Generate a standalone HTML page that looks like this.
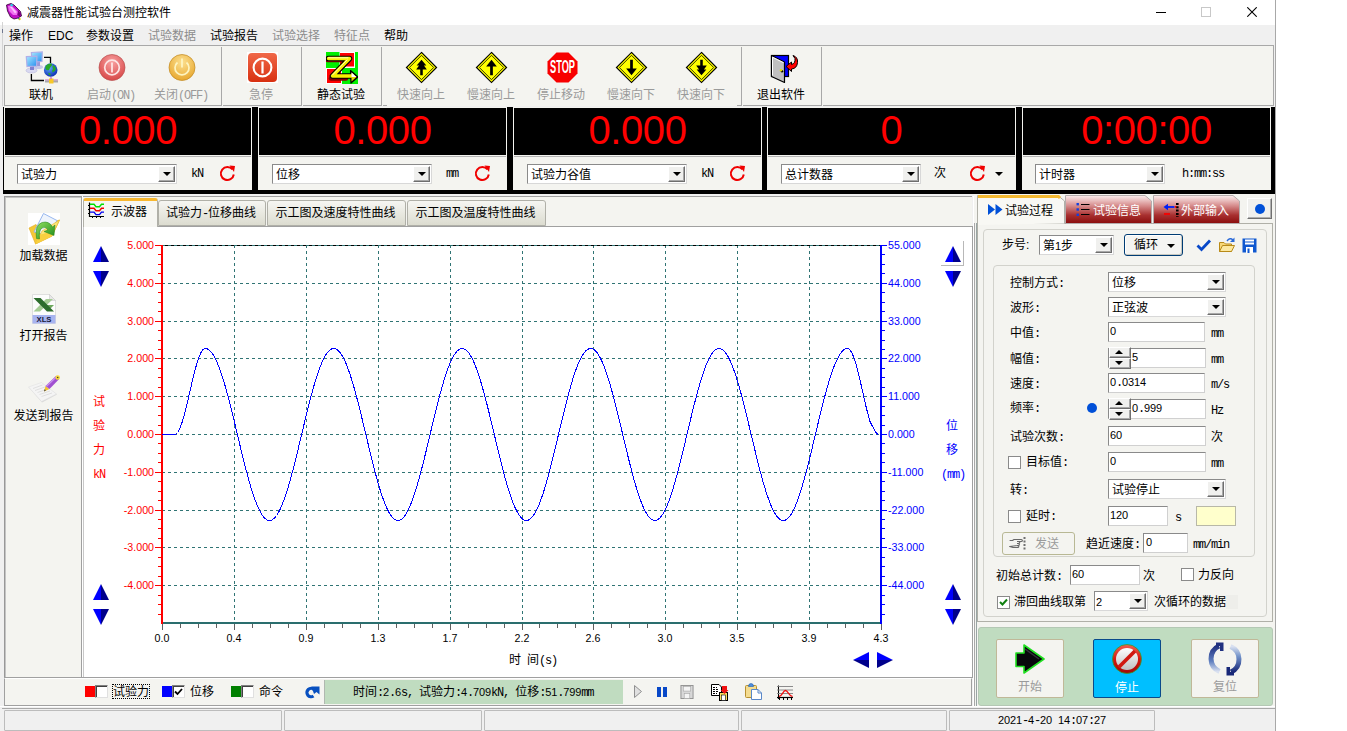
<!DOCTYPE html>
<html lang="zh-CN"><head><meta charset="utf-8"><title>减震器性能试验台测控软件</title>
<style>
*{box-sizing:border-box;margin:0;padding:0}
html,body{width:1347px;height:731px;overflow:hidden;background:#fff}
body{font-family:"Liberation Sans","Noto Sans CJK SC",sans-serif;font-size:12px;color:#000;line-height:1}
#win{position:absolute;left:0;top:0;width:1276px;height:731px;background:#f0f0f0;overflow:hidden}
.a{position:absolute}
.t{position:absolute;white-space:nowrap;font-size:12px;line-height:14px;height:14px}
.l{white-space:pre;font-family:"Liberation Mono",monospace;letter-spacing:-1.2px;font-size:12px}
.l b{display:inline-block;width:6px;text-align:center;font-family:"Liberation Sans",sans-serif;font-size:11px;font-weight:normal;letter-spacing:0}
.c{text-align:center}
.dis{color:#9a9a9a}
.menu{position:absolute;top:28px;height:16px;line-height:16px;font-size:12px;white-space:nowrap}
.panelbg{background:#f4f4f0}
.tb{position:absolute;top:88px;width:70px;text-align:center;font-size:12px;line-height:14px;white-space:nowrap}
.combo{position:absolute;background:#fff;border:1px solid #8a8a8a;border-right-color:#d8d8d8;border-bottom-color:#d8d8d8;height:20px}
.combo .tx{position:absolute;left:3px;top:3px;font-size:12px;line-height:14px;white-space:nowrap}
.combo .btn{position:absolute;right:1px;top:1px;bottom:1px;width:17px;background:#f0f0ee;border:1px solid #fff;border-right-color:#6e6e6e;border-bottom-color:#6e6e6e;box-shadow:inset -1px -1px 0 #a8a8a8}
.combo .btn:after{content:"";position:absolute;left:4px;top:5px;border:4px solid transparent;border-top:4px solid #000;border-bottom:0}
.inp{position:absolute;background:#fff;border:1px solid #8a8a8a;border-right-color:#d0d0d0;border-bottom-color:#d0d0d0;height:20px}
.inp .tx{position:absolute;left:3px;top:1px;font-size:12px;line-height:14px;white-space:nowrap}
.cb{position:absolute;width:13px;height:13px;background:#fff;border:1px solid #8a8a8a}
.grp{position:absolute;border:1px solid #d2d2cc;border-radius:4px}
.big{position:absolute;top:108px;height:47px;background:#000;color:#f00;font-family:"Liberation Sans",sans-serif;font-size:40px;line-height:45px;letter-spacing:-0.4px;text-align:center;white-space:nowrap}
.ax{font-family:"Liberation Sans",sans-serif;font-size:10.67px}
</style></head><body><div id="win">
<div class="a" style="left:0;top:0;width:1276px;height:25px;background:#fff"></div>
<svg class="a" style="left:5px;top:2px" width="18" height="19" viewBox="0 0 18 19">
<path d="M1.500 3 L6 1.500 L9 3 L15.500 9.500 L16.500 14 L13 16 L9 17 L5.500 15 L2.500 9Z" fill="#c010c8" stroke="#300030" stroke-width=".8"/>
<path d="M3 4 L6.500 3.500 L13 10 L12 13 L8 13 L4 9Z" fill="#f070f0"/><path d="M5 5 L7 5 L11.500 10 L10 11.500Z" fill="#fcc0fc"/>
<path d="M6 1.800 L8.500 3 L7 4.500 L5 3.500Z" fill="#20e0e8"/><path d="M13 8 L16 12 L15 15 L12.500 13Z" fill="#780080"/>
<circle cx="14.500" cy="17" r="1.200" fill="#e0e000"/><path d="M13 16 l1.500 1" stroke="#2060d0" stroke-width="1"/></svg>
<div class="t" style="left:27px;top:6px;line-height:15px;height:15px">减震器性能试验台测控软件</div>
<div class="a" style="left:1156px;top:12px;width:10px;height:1px;background:#000"></div>
<div class="a" style="left:1201px;top:7px;width:10px;height:10px;border:1px solid #c8c8c8"></div>
<svg class="a" style="left:1247px;top:7px" width="10" height="10" viewBox="0 0 10 10"><path d="M.3 .3 L9.700 9.700 M9.700 .3 L.3 9.700" stroke="#000" stroke-width="1.100"/></svg>
<div class="a" style="left:0;top:25px;width:1276px;height:20px;background:#f0f0f0"></div>
<div class="a" style="left:2px;top:22px;width:1px;height:86px;background:#d4d4d4"></div>
<div class="a" style="left:2px;top:29px;width:1px;height:4px;background:#707890"></div>
<div class="menu" style="left:9px;">操作</div>
<div class="menu" style="left:48px;">EDC</div>
<div class="menu" style="left:86px;">参数设置</div>
<div class="menu" style="left:148px;color:#8c8c8c;">试验数据</div>
<div class="menu" style="left:210px;">试验报告</div>
<div class="menu" style="left:272px;color:#8c8c8c;">试验选择</div>
<div class="menu" style="left:334px;color:#8c8c8c;">特征点</div>
<div class="menu" style="left:384px;">帮助</div>
<div class="a panelbg" style="left:4px;top:45px;width:1270px;height:62px;border:1px solid #a8a8a8;border-bottom:0"></div>
<div class="a" style="left:5px;top:47px;width:217px;height:59px;border-right:1px solid #a8a8a8;border-bottom:1px solid #a8a8a8"></div>
<div class="a" style="left:223px;top:47px;width:79px;height:59px;border-right:1px solid #a8a8a8;border-bottom:1px solid #a8a8a8"></div>
<div class="a" style="left:303px;top:47px;width:79px;height:59px;border-right:1px solid #a8a8a8;border-bottom:1px solid #a8a8a8"></div>
<div class="a" style="left:383px;top:47px;width:359px;height:59px;border-right:1px solid #a8a8a8;"></div>
<div class="a" style="left:743px;top:47px;width:79px;height:59px;border-right:1px solid #a8a8a8;border-bottom:1px solid #a8a8a8"></div>
<div class="a" style="left:383px;top:105px;width:4px;height:1px;background:#a8a8a8"></div>
<div class="a" style="left:737px;top:105px;width:5px;height:1px;background:#a8a8a8"></div>
<div class="a" style="left:823px;top:105px;width:450px;height:1px;background:#a8a8a8"></div>
<div class="tb" style="left:6px">联机</div>
<div class="tb dis" style="left:76px">启动<span class="l">(ON)</span></div>
<div class="tb dis" style="left:146px">关闭<span class="l">(OFF)</span></div>
<div class="tb dis" style="left:226px">急停</div>
<div class="tb" style="left:306px">静态试验</div>
<div class="tb dis" style="left:386px">快速向上</div>
<div class="tb dis" style="left:456px">慢速向上</div>
<div class="tb dis" style="left:526px">停止移动</div>
<div class="tb dis" style="left:596px">慢速向下</div>
<div class="tb dis" style="left:666px">快速向下</div>
<div class="tb" style="left:746px">退出软件</div>
<svg class="a" style="left:25px;top:51px" width="34" height="34" viewBox="0 0 34 34">
<defs><linearGradient id="scr" x1="0" y1="0" x2="1" y2="1"><stop offset="0" stop-color="#a8e8ff"/><stop offset="1" stop-color="#2890f0"/></linearGradient>
<radialGradient id="glb" cx=".4" cy=".35" r=".7"><stop offset="0" stop-color="#60a8ff"/><stop offset="1" stop-color="#0828b0"/></radialGradient></defs>
<path d="M19 6.300 H25.500 V12 M6.400 23 V29.500 H19" fill="none" stroke="#000" stroke-width="1.300"/>
<ellipse cx="13.500" cy="16" rx="4.500" ry="2" fill="#c8c8e8"/><path d="M11 10 h4 v5 h-4z" fill="#9898d8"/>
<path d="M6.400 1.500 L17.300 1 L17 10.500 L7 11Z" fill="url(#scr)" stroke="#b0b0e8" stroke-width="1.200"/>
<ellipse cx="6.500" cy="19.500" rx="5.500" ry="2.500" fill="#d8d8f0" stroke="#b0b0d8" stroke-width=".5"/><path d="M5 14 h4 v5 h-4z" fill="#8080d0"/>
<path d="M1.300 5.700 L11.900 5.200 L11.600 15 L2 15.500Z" fill="url(#scr)" stroke="#b0b0e8" stroke-width="1.200"/>
<circle cx="25.700" cy="19" r="6.800" fill="url(#glb)"/>
<path d="M21 14.500 q2.500 -2.500 5.500 -2 q1.500 1.500 -.5 3 q-1 1 -2 3.500 q-2 1 -3.500 -1 q-.5 -2 .5 -3.500z M28 14 q2.500 1 3 4 q-1 3 -3.500 3.500 q-1 -2 .5 -3.500 q-1 -2 0 -4z M23.500 21.500 q2 .5 2.500 2.500 q-1.500 .5 -2.500 -.5z" fill="#28a828"/>
<path d="M20 29 H33" stroke="#c040c0" stroke-width=".8"/><rect x="20" y="29.500" width="13" height="2" fill="#a8a8a8"/><rect x="24" y="27.500" width="4.500" height="5" fill="#f8c828"/><path d="M26 26 V28" stroke="#c040c0" stroke-width="1"/>
</svg>
<svg class="a" style="left:96px;top:52px" width="32" height="32" viewBox="0 0 32 32"><defs>
<radialGradient id="gr" cx=".5" cy=".3" r=".7"><stop offset="0" stop-color="#f8a0a0"/><stop offset="1" stop-color="#d84848"/></radialGradient>
<radialGradient id="go" cx=".5" cy=".3" r=".7"><stop offset="0" stop-color="#fce090"/><stop offset="1" stop-color="#e8a830"/></radialGradient></defs>
<circle cx="16" cy="15.500" r="13" fill="url(#gr)" stroke="#b85050" stroke-width=".7"/><circle cx="16" cy="15.500" r="7.300" fill="none" stroke="#fde4e4" stroke-width="1.700"/><rect x="15.100" y="10.500" width="1.800" height="10" fill="#fde4e4"/></svg>
<svg class="a" style="left:166px;top:52px" width="32" height="32" viewBox="0 0 32 32">
<circle cx="16" cy="15.500" r="13" fill="url(#go)" stroke="#c08820" stroke-width=".7"/><path d="M11.500 10.500 a7 7 0 1 0 9 0" fill="none" stroke="#fdf4c0" stroke-width="1.700"/><rect x="15.100" y="6.500" width="1.800" height="9" fill="#fdf4c0"/></svg>
<svg class="a" style="left:247px;top:52px" width="31" height="31" viewBox="0 0 31 31"><defs>
<linearGradient id="gs" x1="0" y1="0" x2="0" y2="1"><stop offset="0" stop-color="#f06848"/><stop offset="1" stop-color="#d83010"/></linearGradient></defs>
<rect width="31" height="31" fill="#fff"/><rect x="1" y="1" width="29" height="29" rx="4" fill="url(#gs)"/><circle cx="15.500" cy="15.500" r="8.900" fill="none" stroke="#fff" stroke-width="2.100"/><rect x="14.400" y="9.500" width="2.200" height="12" fill="#fff"/></svg>
<svg class="a" style="left:326px;top:52px" width="32" height="32" viewBox="0 0 32 32">
<rect width="32" height="32" fill="#fff"/>
<rect x="0" y="0" width="13.500" height="16" fill="#00f000"/><rect x="14" y="1" width="14" height="13.500" fill="#ff0000"/><rect x="29" y="0" width="3" height="32" fill="#00f000"/>
<rect x="1" y="17" width="14" height="14" fill="#ff0000"/><rect x="16" y="16" width="16" height="16" fill="#00f000"/>
<path d="M1.500 8 H23 L5 26.500 H20" fill="none" stroke="#800000" stroke-width="4.500" stroke-linejoin="round" stroke-linecap="round"/>
<path d="M2.500 6.500 H23.500 L6.500 24 H26" fill="none" stroke="#000" stroke-width="5.600" stroke-linejoin="round" stroke-linecap="round"/>
<path d="M24.500 18.500 L32 25 L25 31Z" fill="#000" stroke="#000" stroke-width="1.200" stroke-linejoin="round"/>
<path d="M2.500 6.500 H23.500 L6.500 24 H26" fill="none" stroke="#f8f000" stroke-width="3.400" stroke-linejoin="round" stroke-linecap="round"/>
<path d="M25.500 20.500 L30.500 25 L25.500 29.500Z" fill="#e8d800"/><path d="M25.500 20.500 L30.500 25 L25.500 25Z" fill="#ffffff"/>
<path d="M2.500 5.800 H22 M21 8 L6.500 23" fill="none" stroke="#ffffc0" stroke-width="1" stroke-linecap="round"/>
</svg>
<svg class="a" style="left:405px;top:51px" width="33" height="33" viewBox="0 0 34 34"><path d="M17 1.5 L32.5 17 L17 32.5 L1.5 17Z" fill="#ffff00" stroke="#000" stroke-width="1.2"/><path d="M17 4.5 L29.5 17 L17 29.5 L4.5 17Z" fill="none" stroke="#000" stroke-width=".8"/><path d="M17 9 L22 15 H19.5 L22.5 19 H18.3 V25 H15.7 V19 H11.5 L14.5 15 H12Z" fill="#000"/></svg>
<svg class="a" style="left:475px;top:51px" width="33" height="33" viewBox="0 0 34 34"><path d="M17 1.5 L32.5 17 L17 32.5 L1.5 17Z" fill="#ffff00" stroke="#000" stroke-width="1.2"/><path d="M17 4.5 L29.5 17 L17 29.5 L4.5 17Z" fill="none" stroke="#000" stroke-width=".8"/><path d="M17 9 L22.5 16 H18.4 V25 H15.6 V16 H11.5Z" fill="#000"/></svg>
<svg class="a" style="left:615px;top:51px" width="33" height="33" viewBox="0 0 34 34"><path d="M17 1.5 L32.5 17 L17 32.5 L1.5 17Z" fill="#ffff00" stroke="#000" stroke-width="1.2"/><path d="M17 4.5 L29.5 17 L17 29.5 L4.5 17Z" fill="none" stroke="#000" stroke-width=".8"/><path d="M17 25 L22.5 18 H18.4 V9 H15.6 V18 H11.5Z" fill="#000"/></svg>
<svg class="a" style="left:685px;top:51px" width="33" height="33" viewBox="0 0 34 34"><path d="M17 1.5 L32.5 17 L17 32.5 L1.5 17Z" fill="#ffff00" stroke="#000" stroke-width="1.2"/><path d="M17 4.5 L29.5 17 L17 29.5 L4.5 17Z" fill="none" stroke="#000" stroke-width=".8"/><path d="M17 25 L22 19 H19.5 L22.5 15 H18.3 V9 H15.7 V15 H11.5 L14.5 19 H12Z" fill="#000"/></svg>
<svg class="a" style="left:547px;top:52px" width="31" height="31" viewBox="0 0 31 31">
<path d="M9.5 .5 H21.5 L30.5 9.5 V21.5 L21.5 30.5 H9.5 L.5 21.5 V9.5Z" fill="#f80000"/>
<text x="15.5" y="21" text-anchor="middle" font-family="Liberation Sans,sans-serif" font-weight="bold" font-size="14" fill="#fff" textLength="25" lengthAdjust="spacingAndGlyphs" transform="translate(0,-6.5) scale(1,1.3)">STOP</text></svg>
<svg class="a" style="left:769px;top:53px" width="30" height="31" viewBox="0 0 30 31">
<rect x="2.500" y="2.500" width="17" height="21" fill="#0000ff" stroke="#000" stroke-width="1.200"/>
<path d="M2.500 2.500 L15.500 9 V29.500 L2.500 23.500Z" fill="#c0c0c0" stroke="#000" stroke-width="1.200" stroke-linejoin="round"/>
<path d="M3.500 22.500 V4.200 L14.500 9.700" fill="none" stroke="#fff" stroke-width="1"/>
<circle cx="13" cy="18.200" r="1.200" fill="#000"/><circle cx="12" cy="17.300" r="1.200" fill="#e8e000"/>
<path d="M17 13.500 L22.500 9 V11.500 Q26.500 10.500 26 5.500 L24 2.500 Q29 4 28.500 9.500 Q28 15.500 22.500 16 V18.500Z" fill="#ff0000" stroke="#000" stroke-width="1" stroke-linejoin="round"/>
</svg>
<div class="a" style="left:0;top:106px;width:1276px;height:2px;background:#f0f0f0"></div>
<div class="a" style="left:3px;top:107px;width:1273px;height:87px;background:#000"></div>
<div class="a panelbg" style="left:4px;top:107px;width:248px;height:83px"></div>
<div class="big" style="left:5px;width:246px">0.000</div>
<div class="a" style="left:5px;top:156px;width:246px;height:1px;background:#b4b4b4"></div>
<div class="combo" style="left:17px;top:164px;width:160px"><div class="tx">试验力</div><div class="btn"></div></div>
<div class="t" style="left:191px;top:166px;font-size:11px"><span class="l">kN</span></div>
<svg class="a" style="left:218px;top:164px" width="18" height="18" viewBox="0 0 18 18"><path d="M14.500 5.500 A6.500 6.500 0 1 0 15.800 10.500" fill="none" stroke="#f00000" stroke-width="2"/><path d="M11.500 1.500 L17 2 L16 8Z" fill="#f00000"/></svg>
<div class="a panelbg" style="left:258px;top:107px;width:249px;height:83px"></div>
<div class="big" style="left:259px;width:247px">0.000</div>
<div class="a" style="left:259px;top:156px;width:247px;height:1px;background:#b4b4b4"></div>
<div class="combo" style="left:272px;top:164px;width:160px"><div class="tx">位移</div><div class="btn"></div></div>
<div class="t" style="left:446px;top:166px;font-size:11px"><span class="l">mm</span></div>
<svg class="a" style="left:473px;top:164px" width="18" height="18" viewBox="0 0 18 18"><path d="M14.500 5.500 A6.500 6.500 0 1 0 15.800 10.500" fill="none" stroke="#f00000" stroke-width="2"/><path d="M11.500 1.500 L17 2 L16 8Z" fill="#f00000"/></svg>
<div class="a panelbg" style="left:513px;top:107px;width:249px;height:83px"></div>
<div class="big" style="left:514px;width:247px">0.000</div>
<div class="a" style="left:514px;top:156px;width:247px;height:1px;background:#b4b4b4"></div>
<div class="combo" style="left:527px;top:164px;width:160px"><div class="tx">试验力谷值</div><div class="btn"></div></div>
<div class="t" style="left:701px;top:166px;font-size:11px"><span class="l">kN</span></div>
<svg class="a" style="left:728px;top:164px" width="18" height="18" viewBox="0 0 18 18"><path d="M14.500 5.500 A6.500 6.500 0 1 0 15.800 10.500" fill="none" stroke="#f00000" stroke-width="2"/><path d="M11.500 1.500 L17 2 L16 8Z" fill="#f00000"/></svg>
<div class="a panelbg" style="left:767px;top:107px;width:249px;height:83px"></div>
<div class="big" style="left:768px;width:247px">0</div>
<div class="a" style="left:768px;top:156px;width:247px;height:1px;background:#b4b4b4"></div>
<div class="combo" style="left:781px;top:164px;width:140px"><div class="tx">总计数器</div><div class="btn"></div></div>
<div class="t" style="left:934px;top:166px">次</div>
<svg class="a" style="left:968px;top:164px" width="18" height="18" viewBox="0 0 18 18"><path d="M14.500 5.500 A6.500 6.500 0 1 0 15.800 10.500" fill="none" stroke="#f00000" stroke-width="2"/><path d="M11.500 1.500 L17 2 L16 8Z" fill="#f00000"/></svg>
<div class="a" style="left:995px;top:172px;border:4px solid transparent;border-top:4px solid #000;border-bottom:0"></div>
<div class="a panelbg" style="left:1022px;top:107px;width:249px;height:83px"></div>
<div class="big" style="left:1023px;width:247px">0:00:00</div>
<div class="a" style="left:1023px;top:156px;width:247px;height:1px;background:#b4b4b4"></div>
<div class="combo" style="left:1035px;top:164px;width:130px"><div class="tx">计时器</div><div class="btn"></div></div>
<div class="t" style="left:1182px;top:166px"><span class="l">h:mm:ss</span></div>
<div class="a panelbg" style="left:4px;top:196px;width:78px;height:482px;border:1px solid #989898;border-right-color:#a0a0a0;box-shadow:inset 1px 1px 0 #c4c4c4"></div>
<div class="a" style="left:82px;top:196px;width:1px;height:482px;background:#fff"></div>
<div class="a" style="left:28px;top:213px;width:32px;height:32px;background:#fff"></div>
<svg class="a" style="left:28px;top:213px" width="32" height="32" viewBox="0 0 32 32">
<defs><linearGradient id="fg" x1="0" y1="0" x2="1" y2="1"><stop offset="0" stop-color="#90e060"/><stop offset="1" stop-color="#1c8818"/></linearGradient></defs>
<path d="M1 15 L8 11.500 L10.500 14 L25 9 L31.500 7 L24 23 L7.500 31Z" fill="#f4c838" stroke="#e0a820" stroke-width=".6"/>
<path d="M15.500 .5 L29 7.500 L20 22 L6 19Z" fill="#eef4fc" stroke="#8cb0ec" stroke-width=".9"/>
<path d="M7.500 31 L14 18 L31.500 7 L24 23Z" fill="#fce478" stroke="#e8b828" stroke-width=".6"/>
<path d="M7.500 31 L11 22 L22 19 L24 23Z" fill="#f8d040"/>
<path d="M8.500 25.500 Q6.500 12 14 9.500 Q21 7.500 24.500 14 L27 12 L26 22.500 L16 18.500 L20 17 Q17.500 13 14 15 Q10.500 17.500 11.500 26Z" fill="url(#fg)" stroke="#208018" stroke-width=".5"/>
</svg>
<div class="t c" style="left:5px;top:249px;width:77px">加载数据</div>
<svg class="a" style="left:32px;top:294px" width="24" height="30" viewBox="0 0 24 30">
<path d="M.5 .5 H17.500 L23.500 6.500 V29.500 H.5Z" fill="#fcfcfc" stroke="#d8d8d8" stroke-width=".8"/><path d="M17.500 .5 V6.500 H23.500Z" fill="#e8e8e8" stroke="#c8c8c8" stroke-width=".6"/>
<path d="M14 5 L21 5 L8 17.500 L1.500 17.500Z" fill="#a4cc94"/><path d="M15 11 H22 L19 14 H13Z" fill="#6ea85e"/>
<path d="M1.500 4 L8.500 4 L22 17.500 L15 17.500Z" fill="#2c6c2c"/>
<rect x=".5" y="21" width="23" height="8.500" fill="#a8b4f0"/>
<text x="12" y="28.300" font-family="Liberation Sans,sans-serif" font-size="8" font-weight="bold" text-anchor="middle" fill="#181838" textLength="15" lengthAdjust="spacingAndGlyphs">XLS</text></svg>
<div class="t c" style="left:5px;top:329px;width:77px">打开报告</div>
<svg class="a" style="left:28px;top:375px" width="32" height="28" viewBox="0 0 32 28">
<path d="M1.500 13 L14 8.500 L29 19.500 L14 27.500Z" fill="#d8d8d8"/>
<path d="M.5 12 L13.500 7.500 L28.500 19 L13.500 26.500Z" fill="#f4f4f4" stroke="#e0e0e0" stroke-width=".6"/>
<path d="M5 13.500 L14.500 10 M7 15.500 L17 12 M9.500 17.500 L19.500 14 M11.500 19.500 L22 16 M13.500 21.500 L24 18" stroke="#dcdcdc" stroke-width=".9"/>
<path d="M16 16.500 L17.500 11 L21.500 14Z" fill="#f4c430"/><path d="M16 16.500 L16.600 14.300 L18 15.300Z" fill="#404040"/>
<path d="M17.500 11 L28.200 .8 L31.200 4 L21.500 14Z" fill="#a050d0"/><path d="M18.500 11.200 L28.500 1.700" stroke="#c890f0" stroke-width="1.200"/>
<circle cx="29.700" cy="2.500" r="2.200" fill="#f8d838"/><circle cx="29.700" cy="2.500" r=".8" fill="#404020"/>
</svg>
<div class="t c" style="left:5px;top:409px;width:77px">发送到报告</div>
<div class="a panelbg" style="left:83px;top:196px;width:889px;height:31px;border-top:1px solid #a0a0a0"></div>
<div class="a" style="left:83px;top:226px;width:890px;height:452px;background:#fff;border:1px solid #a0a0a0;border-left-color:#c8c8c8"></div>
<div class="a" style="left:973px;top:196px;width:4px;height:512px;background:#f4f4f0;border-left:1px solid #fff;border-right:1px solid #fff"></div>
<div class="a" style="left:974px;top:196px;width:1px;height:512px;background:#a8a8a8"></div>
<div class="a" style="left:83px;top:198px;width:75px;height:29px;background:#f6f6f2;border:1px solid #b0b0a8;border-bottom:0;border-top:3px solid #f8b830;border-radius:3px 3px 0 0"></div>
<svg class="a" style="left:87px;top:202px" width="18" height="17" viewBox="0 0 18 17">
<path d="M2.500 .5 V14.500 H17" stroke="#000" stroke-width="1.200" fill="none"/><path d="M1 3.500 H2 M1 7.500 H2 M1 11.500 H2 M5.500 15 V16 M9.500 15 V16 M13.500 15 V16" stroke="#000" stroke-width="1"/>
<path d="M3 2.300 H7 L9 4.800 H12.500 L14.500 2.300 H17" stroke="#00e000" stroke-width="1.400" fill="none"/>
<path d="M3 6.200 H7 L9 8.700 H12.500 L14.500 6.200 H17" stroke="#f00000" stroke-width="1.400" fill="none"/>
<path d="M3 10.100 H7 L9 12.600 H12.500 L14.500 10.100 H17" stroke="#0000f0" stroke-width="1.400" fill="none"/></svg>
<div class="t" style="left:111px;top:205px">示波器</div>
<div class="a" style="left:158px;top:200px;width:108px;height:26px;background:linear-gradient(#f6f6f2,#dcdcd0);border:1px solid #b0b0a8;border-radius:3px 3px 0 0"></div>
<div class="t c" style="left:157px;top:206px;width:108px">试验力<span class="l">-</span>位移曲线</div>
<div class="a" style="left:267px;top:200px;width:139px;height:26px;background:linear-gradient(#f6f6f2,#dcdcd0);border:1px solid #b0b0a8;border-radius:3px 3px 0 0"></div>
<div class="t c" style="left:266px;top:206px;width:139px">示工图及速度特性曲线</div>
<div class="a" style="left:407px;top:200px;width:139px;height:26px;background:linear-gradient(#f6f6f2,#dcdcd0);border:1px solid #b0b0a8;border-radius:3px 3px 0 0"></div>
<div class="t c" style="left:406px;top:206px;width:139px">示工图及温度特性曲线</div>
<svg class="a" style="left:83px;top:227px" width="888" height="450" viewBox="83 227 888 450" shape-rendering="crispEdges"><path d="M162.0 245.5 H880.0" stroke="#307474" stroke-width="1" stroke-dasharray="3 3" fill="none"/><path d="M162.0 283.5 H880.0" stroke="#307474" stroke-width="1" stroke-dasharray="3 3" fill="none"/><path d="M162.0 321.5 H880.0" stroke="#307474" stroke-width="1" stroke-dasharray="3 3" fill="none"/><path d="M162.0 358.5 H880.0" stroke="#307474" stroke-width="1" stroke-dasharray="3 3" fill="none"/><path d="M162.0 396.5 H880.0" stroke="#307474" stroke-width="1" stroke-dasharray="3 3" fill="none"/><path d="M162.0 434.5 H880.0" stroke="#307474" stroke-width="1" stroke-dasharray="3 3" fill="none"/><path d="M162.0 472.5 H880.0" stroke="#307474" stroke-width="1" stroke-dasharray="3 3" fill="none"/><path d="M162.0 510.5 H880.0" stroke="#307474" stroke-width="1" stroke-dasharray="3 3" fill="none"/><path d="M162.0 547.5 H880.0" stroke="#307474" stroke-width="1" stroke-dasharray="3 3" fill="none"/><path d="M162.0 585.5 H880.0" stroke="#307474" stroke-width="1" stroke-dasharray="3 3" fill="none"/><path d="M234.5 245.0 V622.0" stroke="#307474" stroke-width="1" stroke-dasharray="3 3" fill="none"/><path d="M306.5 245.0 V622.0" stroke="#307474" stroke-width="1" stroke-dasharray="3 3" fill="none"/><path d="M378.5 245.0 V622.0" stroke="#307474" stroke-width="1" stroke-dasharray="3 3" fill="none"/><path d="M450.5 245.0 V622.0" stroke="#307474" stroke-width="1" stroke-dasharray="3 3" fill="none"/><path d="M522.5 245.0 V622.0" stroke="#307474" stroke-width="1" stroke-dasharray="3 3" fill="none"/><path d="M593.5 245.0 V622.0" stroke="#307474" stroke-width="1" stroke-dasharray="3 3" fill="none"/><path d="M665.5 245.0 V622.0" stroke="#307474" stroke-width="1" stroke-dasharray="3 3" fill="none"/><path d="M737.5 245.0 V622.0" stroke="#307474" stroke-width="1" stroke-dasharray="3 3" fill="none"/><path d="M809.5 245.0 V622.0" stroke="#307474" stroke-width="1" stroke-dasharray="3 3" fill="none"/><path d="M162.0 245.5 H880.0" stroke="#307474" stroke-width="1" stroke-dasharray="3 3" fill="none"/><path d="M165.0 245.5 H880.0" stroke="#000" stroke-width="1" stroke-dasharray="3 3" fill="none"/><rect x="162" y="622" width="720" height="2" fill="#2a6e6e"/><rect x="162" y="624" width="1" height="6" fill="#606060"/><rect x="180" y="624" width="1" height="4" fill="#606060"/><rect x="198" y="624" width="1" height="4" fill="#606060"/><rect x="216" y="624" width="1" height="4" fill="#606060"/><rect x="234" y="624" width="1" height="6" fill="#606060"/><rect x="252" y="624" width="1" height="4" fill="#606060"/><rect x="270" y="624" width="1" height="4" fill="#606060"/><rect x="288" y="624" width="1" height="4" fill="#606060"/><rect x="306" y="624" width="1" height="6" fill="#606060"/><rect x="324" y="624" width="1" height="4" fill="#606060"/><rect x="342" y="624" width="1" height="4" fill="#606060"/><rect x="360" y="624" width="1" height="4" fill="#606060"/><rect x="378" y="624" width="1" height="6" fill="#606060"/><rect x="396" y="624" width="1" height="4" fill="#606060"/><rect x="414" y="624" width="1" height="4" fill="#606060"/><rect x="432" y="624" width="1" height="4" fill="#606060"/><rect x="450" y="624" width="1" height="6" fill="#606060"/><rect x="468" y="624" width="1" height="4" fill="#606060"/><rect x="486" y="624" width="1" height="4" fill="#606060"/><rect x="504" y="624" width="1" height="4" fill="#606060"/><rect x="522" y="624" width="1" height="6" fill="#606060"/><rect x="539" y="624" width="1" height="4" fill="#606060"/><rect x="557" y="624" width="1" height="4" fill="#606060"/><rect x="575" y="624" width="1" height="4" fill="#606060"/><rect x="593" y="624" width="1" height="6" fill="#606060"/><rect x="611" y="624" width="1" height="4" fill="#606060"/><rect x="629" y="624" width="1" height="4" fill="#606060"/><rect x="647" y="624" width="1" height="4" fill="#606060"/><rect x="665" y="624" width="1" height="6" fill="#606060"/><rect x="683" y="624" width="1" height="4" fill="#606060"/><rect x="701" y="624" width="1" height="4" fill="#606060"/><rect x="719" y="624" width="1" height="4" fill="#606060"/><rect x="737" y="624" width="1" height="6" fill="#606060"/><rect x="755" y="624" width="1" height="4" fill="#606060"/><rect x="773" y="624" width="1" height="4" fill="#606060"/><rect x="791" y="624" width="1" height="4" fill="#606060"/><rect x="809" y="624" width="1" height="6" fill="#606060"/><rect x="827" y="624" width="1" height="4" fill="#606060"/><rect x="845" y="624" width="1" height="4" fill="#606060"/><rect x="863" y="624" width="1" height="4" fill="#606060"/><rect x="881" y="624" width="1" height="6" fill="#606060"/><rect x="161" y="245" width="2" height="379" fill="#f00"/><rect x="155" y="245" width="6" height="1" fill="#f00"/><rect x="158" y="254" width="3" height="1" fill="#f00"/><rect x="158" y="264" width="3" height="1" fill="#f00"/><rect x="158" y="273" width="3" height="1" fill="#f00"/><rect x="155" y="283" width="6" height="1" fill="#f00"/><rect x="158" y="292" width="3" height="1" fill="#f00"/><rect x="158" y="302" width="3" height="1" fill="#f00"/><rect x="158" y="311" width="3" height="1" fill="#f00"/><rect x="155" y="321" width="6" height="1" fill="#f00"/><rect x="158" y="330" width="3" height="1" fill="#f00"/><rect x="158" y="340" width="3" height="1" fill="#f00"/><rect x="158" y="349" width="3" height="1" fill="#f00"/><rect x="155" y="358" width="6" height="1" fill="#f00"/><rect x="158" y="368" width="3" height="1" fill="#f00"/><rect x="158" y="377" width="3" height="1" fill="#f00"/><rect x="158" y="387" width="3" height="1" fill="#f00"/><rect x="155" y="396" width="6" height="1" fill="#f00"/><rect x="158" y="406" width="3" height="1" fill="#f00"/><rect x="158" y="415" width="3" height="1" fill="#f00"/><rect x="158" y="425" width="3" height="1" fill="#f00"/><rect x="155" y="434" width="6" height="1" fill="#f00"/><rect x="158" y="443" width="3" height="1" fill="#f00"/><rect x="158" y="453" width="3" height="1" fill="#f00"/><rect x="158" y="462" width="3" height="1" fill="#f00"/><rect x="155" y="472" width="6" height="1" fill="#f00"/><rect x="158" y="481" width="3" height="1" fill="#f00"/><rect x="158" y="491" width="3" height="1" fill="#f00"/><rect x="158" y="500" width="3" height="1" fill="#f00"/><rect x="155" y="510" width="6" height="1" fill="#f00"/><rect x="158" y="519" width="3" height="1" fill="#f00"/><rect x="158" y="528" width="3" height="1" fill="#f00"/><rect x="158" y="538" width="3" height="1" fill="#f00"/><rect x="155" y="547" width="6" height="1" fill="#f00"/><rect x="158" y="557" width="3" height="1" fill="#f00"/><rect x="158" y="566" width="3" height="1" fill="#f00"/><rect x="158" y="576" width="3" height="1" fill="#f00"/><rect x="155" y="585" width="6" height="1" fill="#f00"/><rect x="158" y="595" width="3" height="1" fill="#f00"/><rect x="158" y="604" width="3" height="1" fill="#f00"/><rect x="158" y="614" width="3" height="1" fill="#f00"/><rect x="880" y="245" width="2" height="379" fill="#00f"/><rect x="882" y="245" width="5" height="1" fill="#00f"/><rect x="882" y="254" width="3" height="1" fill="#00f"/><rect x="882" y="264" width="3" height="1" fill="#00f"/><rect x="882" y="273" width="3" height="1" fill="#00f"/><rect x="882" y="283" width="5" height="1" fill="#00f"/><rect x="882" y="292" width="3" height="1" fill="#00f"/><rect x="882" y="302" width="3" height="1" fill="#00f"/><rect x="882" y="311" width="3" height="1" fill="#00f"/><rect x="882" y="321" width="5" height="1" fill="#00f"/><rect x="882" y="330" width="3" height="1" fill="#00f"/><rect x="882" y="340" width="3" height="1" fill="#00f"/><rect x="882" y="349" width="3" height="1" fill="#00f"/><rect x="882" y="358" width="5" height="1" fill="#00f"/><rect x="882" y="368" width="3" height="1" fill="#00f"/><rect x="882" y="377" width="3" height="1" fill="#00f"/><rect x="882" y="387" width="3" height="1" fill="#00f"/><rect x="882" y="396" width="5" height="1" fill="#00f"/><rect x="882" y="406" width="3" height="1" fill="#00f"/><rect x="882" y="415" width="3" height="1" fill="#00f"/><rect x="882" y="425" width="3" height="1" fill="#00f"/><rect x="882" y="434" width="5" height="1" fill="#00f"/><rect x="882" y="443" width="3" height="1" fill="#00f"/><rect x="882" y="453" width="3" height="1" fill="#00f"/><rect x="882" y="462" width="3" height="1" fill="#00f"/><rect x="882" y="472" width="5" height="1" fill="#00f"/><rect x="882" y="481" width="3" height="1" fill="#00f"/><rect x="882" y="491" width="3" height="1" fill="#00f"/><rect x="882" y="500" width="3" height="1" fill="#00f"/><rect x="882" y="510" width="5" height="1" fill="#00f"/><rect x="882" y="519" width="3" height="1" fill="#00f"/><rect x="882" y="528" width="3" height="1" fill="#00f"/><rect x="882" y="538" width="3" height="1" fill="#00f"/><rect x="882" y="547" width="5" height="1" fill="#00f"/><rect x="882" y="557" width="3" height="1" fill="#00f"/><rect x="882" y="566" width="3" height="1" fill="#00f"/><rect x="882" y="576" width="3" height="1" fill="#00f"/><rect x="882" y="585" width="5" height="1" fill="#00f"/><rect x="882" y="595" width="3" height="1" fill="#00f"/><rect x="882" y="604" width="3" height="1" fill="#00f"/><rect x="882" y="614" width="3" height="1" fill="#00f"/></svg>
<svg class="a" style="left:83px;top:227px" width="888" height="450" viewBox="83 227 888 450"><path d="M162.0 434.5 L174.5 434.5 L175.5 434.3 L176.5 433.6 L177.5 432.5 L178.5 431.0 L179.5 429.0 L180.5 426.7 L181.5 424.0 L182.5 421.0 L183.5 417.6 L184.5 414.0 L185.5 410.2 L186.5 406.1 L187.5 401.9 L188.5 397.6 L189.5 393.3 L190.5 388.9 L191.5 384.5 L192.5 380.2 L193.5 376.1 L194.5 372.1 L195.5 368.3 L196.5 364.7 L197.5 361.4 L198.5 358.4 L199.5 355.8 L200.5 353.6 L201.5 351.7 L202.5 350.2 L203.5 349.2 L204.5 348.6 L205.5 348.5 L206.5 348.6 L207.5 349.0 L208.5 349.6 L209.5 350.3 L210.5 351.3 L211.5 352.4 L212.5 353.8 L213.5 355.3 L214.5 357.1 L215.5 359.0 L216.5 361.1 L217.5 363.4 L218.5 365.8 L219.5 368.4 L220.5 371.2 L221.5 374.1 L222.5 377.2 L223.5 380.4 L224.5 383.7 L225.5 387.2 L226.5 390.7 L227.5 394.4 L228.5 398.2 L229.5 402.0 L230.5 406.0 L231.5 410.0 L232.5 414.0 L233.5 418.2 L234.5 422.3 L235.5 426.5 L236.5 430.7 L237.5 434.9 L238.5 439.1 L239.5 443.3 L240.5 447.5 L241.5 451.6 L242.5 455.7 L243.5 459.7 L244.5 463.7 L245.5 467.7 L246.5 471.5 L247.5 475.2 L248.5 478.9 L249.5 482.4 L250.5 485.9 L251.5 489.2 L252.5 492.4 L253.5 495.4 L254.5 498.3 L255.5 501.1 L256.5 503.6 L257.5 506.1 L258.5 508.3 L259.5 510.4 L260.5 512.3 L261.5 514.0 L262.5 515.5 L263.5 516.8 L264.5 517.9 L265.5 518.8 L266.5 519.6 L267.5 520.1 L268.5 520.4 L269.5 520.5 L270.5 520.4 L271.5 520.1 L272.5 519.6 L273.5 518.9 L274.5 518.0 L275.5 516.8 L276.5 515.5 L277.5 514.0 L278.5 512.3 L279.5 510.5 L280.5 508.4 L281.5 506.1 L282.5 503.7 L283.5 501.2 L284.5 498.4 L285.5 495.5 L286.5 492.5 L287.5 489.3 L288.5 486.0 L289.5 482.6 L290.5 479.0 L291.5 475.4 L292.5 471.6 L293.5 467.8 L294.5 463.9 L295.5 459.9 L296.5 455.9 L297.5 451.8 L298.5 447.6 L299.5 443.4 L300.5 439.3 L301.5 435.0 L302.5 430.8 L303.5 426.6 L304.5 422.5 L305.5 418.3 L306.5 414.2 L307.5 410.1 L308.5 406.1 L309.5 402.2 L310.5 398.3 L311.5 394.6 L312.5 390.9 L313.5 387.3 L314.5 383.9 L315.5 380.5 L316.5 377.3 L317.5 374.2 L318.5 371.3 L319.5 368.5 L320.5 365.9 L321.5 363.5 L322.5 361.2 L323.5 359.1 L324.5 357.1 L325.5 355.4 L326.5 353.8 L327.5 352.5 L328.5 351.3 L329.5 350.3 L330.5 349.6 L331.5 349.0 L332.5 348.7 L333.5 348.5 L334.5 348.6 L335.5 348.8 L336.5 349.3 L337.5 350.0 L338.5 350.8 L339.5 351.9 L340.5 353.2 L341.5 354.6 L342.5 356.3 L343.5 358.1 L344.5 360.1 L345.5 362.3 L346.5 364.7 L347.5 367.3 L348.5 370.0 L349.5 372.8 L350.5 375.8 L351.5 379.0 L352.5 382.2 L353.5 385.6 L354.5 389.2 L355.5 392.8 L356.5 396.5 L357.5 400.3 L358.5 404.2 L359.5 408.2 L360.5 412.2 L361.5 416.3 L362.5 420.5 L363.5 424.6 L364.5 428.8 L365.5 433.0 L366.5 437.2 L367.5 441.4 L368.5 445.6 L369.5 449.8 L370.5 453.9 L371.5 458.0 L372.5 462.0 L373.5 465.9 L374.5 469.8 L375.5 473.6 L376.5 477.3 L377.5 480.9 L378.5 484.4 L379.5 487.8 L380.5 491.0 L381.5 494.1 L382.5 497.1 L383.5 499.9 L384.5 502.5 L385.5 505.0 L386.5 507.3 L387.5 509.5 L388.5 511.5 L389.5 513.2 L390.5 514.8 L391.5 516.2 L392.5 517.5 L393.5 518.5 L394.5 519.3 L395.5 519.9 L396.5 520.3 L397.5 520.5 L398.5 520.5 L399.5 520.3 L400.5 519.8 L401.5 519.2 L402.5 518.4 L403.5 517.4 L404.5 516.1 L405.5 514.7 L406.5 513.1 L407.5 511.3 L408.5 509.3 L409.5 507.2 L410.5 504.8 L411.5 502.3 L412.5 499.6 L413.5 496.8 L414.5 493.9 L415.5 490.7 L416.5 487.5 L417.5 484.1 L418.5 480.6 L419.5 477.0 L420.5 473.3 L421.5 469.5 L422.5 465.6 L423.5 461.7 L424.5 457.6 L425.5 453.6 L426.5 449.4 L427.5 445.3 L428.5 441.1 L429.5 436.9 L430.5 432.7 L431.5 428.5 L432.5 424.3 L433.5 420.1 L434.5 416.0 L435.5 411.9 L436.5 407.9 L437.5 403.9 L438.5 400.0 L439.5 396.2 L440.5 392.5 L441.5 388.9 L442.5 385.4 L443.5 382.0 L444.5 378.7 L445.5 375.6 L446.5 372.6 L447.5 369.7 L448.5 367.0 L449.5 364.5 L450.5 362.2 L451.5 360.0 L452.5 358.0 L453.5 356.1 L454.5 354.5 L455.5 353.1 L456.5 351.8 L457.5 350.7 L458.5 349.9 L459.5 349.2 L460.5 348.8 L461.5 348.5 L462.5 348.5 L463.5 348.7 L464.5 349.1 L465.5 349.6 L466.5 350.4 L467.5 351.4 L468.5 352.6 L469.5 354.0 L470.5 355.5 L471.5 357.3 L472.5 359.2 L473.5 361.4 L474.5 363.7 L475.5 366.1 L476.5 368.8 L477.5 371.5 L478.5 374.5 L479.5 377.6 L480.5 380.8 L481.5 384.1 L482.5 387.6 L483.5 391.2 L484.5 394.9 L485.5 398.6 L486.5 402.5 L487.5 406.5 L488.5 410.5 L489.5 414.5 L490.5 418.6 L491.5 422.8 L492.5 427.0 L493.5 431.2 L494.5 435.4 L495.5 439.6 L496.5 443.8 L497.5 447.9 L498.5 452.1 L499.5 456.2 L500.5 460.2 L501.5 464.2 L502.5 468.1 L503.5 471.9 L504.5 475.7 L505.5 479.3 L506.5 482.9 L507.5 486.3 L508.5 489.6 L509.5 492.7 L510.5 495.8 L511.5 498.6 L512.5 501.4 L513.5 503.9 L514.5 506.3 L515.5 508.6 L516.5 510.6 L517.5 512.5 L518.5 514.2 L519.5 515.6 L520.5 516.9 L521.5 518.0 L522.5 518.9 L523.5 519.6 L524.5 520.1 L525.5 520.4 L526.5 520.5 L527.5 520.4 L528.5 520.0 L529.5 519.5 L530.5 518.8 L531.5 517.8 L532.5 516.7 L533.5 515.4 L534.5 513.8 L535.5 512.1 L536.5 510.2 L537.5 508.1 L538.5 505.9 L539.5 503.4 L540.5 500.8 L541.5 498.1 L542.5 495.2 L543.5 492.1 L544.5 488.9 L545.5 485.6 L546.5 482.2 L547.5 478.6 L548.5 474.9 L549.5 471.2 L550.5 467.3 L551.5 463.4 L552.5 459.4 L553.5 455.4 L554.5 451.3 L555.5 447.1 L556.5 442.9 L557.5 438.7 L558.5 434.5 L559.5 430.3 L560.5 426.1 L561.5 422.0 L562.5 417.8 L563.5 413.7 L564.5 409.7 L565.5 405.7 L566.5 401.7 L567.5 397.9 L568.5 394.1 L569.5 390.5 L570.5 386.9 L571.5 383.5 L572.5 380.1 L573.5 376.9 L574.5 373.9 L575.5 371.0 L576.5 368.2 L577.5 365.6 L578.5 363.2 L579.5 360.9 L580.5 358.8 L581.5 356.9 L582.5 355.2 L583.5 353.7 L584.5 352.3 L585.5 351.2 L586.5 350.2 L587.5 349.5 L588.5 349.0 L589.5 348.6 L590.5 348.5 L591.5 348.6 L592.5 348.9 L593.5 349.4 L594.5 350.0 L595.5 350.9 L596.5 352.0 L597.5 353.3 L598.5 354.8 L599.5 356.5 L600.5 358.4 L601.5 360.4 L602.5 362.6 L603.5 365.0 L604.5 367.6 L605.5 370.3 L606.5 373.2 L607.5 376.2 L608.5 379.4 L609.5 382.6 L610.5 386.1 L611.5 389.6 L612.5 393.2 L613.5 397.0 L614.5 400.8 L615.5 404.7 L616.5 408.7 L617.5 412.7 L618.5 416.8 L619.5 421.0 L620.5 425.1 L621.5 429.3 L622.5 433.5 L623.5 437.7 L624.5 441.9 L625.5 446.1 L626.5 450.3 L627.5 454.4 L628.5 458.5 L629.5 462.5 L630.5 466.4 L631.5 470.3 L632.5 474.1 L633.5 477.7 L634.5 481.3 L635.5 484.8 L636.5 488.1 L637.5 491.4 L638.5 494.5 L639.5 497.4 L640.5 500.2 L641.5 502.8 L642.5 505.3 L643.5 507.6 L644.5 509.7 L645.5 511.7 L646.5 513.4 L647.5 515.0 L648.5 516.4 L649.5 517.6 L650.5 518.6 L651.5 519.4 L652.5 519.9 L653.5 520.3 L654.5 520.5 L655.5 520.5 L656.5 520.2 L657.5 519.8 L658.5 519.1 L659.5 518.3 L660.5 517.2 L661.5 516.0 L662.5 514.5 L663.5 512.9 L664.5 511.1 L665.5 509.1 L666.5 506.9 L667.5 504.5 L668.5 502.0 L669.5 499.3 L670.5 496.5 L671.5 493.5 L672.5 490.4 L673.5 487.1 L674.5 483.7 L675.5 480.2 L676.5 476.6 L677.5 472.9 L678.5 469.0 L679.5 465.2 L680.5 461.2 L681.5 457.2 L682.5 453.1 L683.5 448.9 L684.5 444.8 L685.5 440.6 L686.5 436.4 L687.5 432.2 L688.5 428.0 L689.5 423.8 L690.5 419.6 L691.5 415.5 L692.5 411.4 L693.5 407.4 L694.5 403.5 L695.5 399.6 L696.5 395.8 L697.5 392.1 L698.5 388.5 L699.5 385.0 L700.5 381.6 L701.5 378.3 L702.5 375.2 L703.5 372.2 L704.5 369.4 L705.5 366.7 L706.5 364.2 L707.5 361.9 L708.5 359.7 L709.5 357.7 L710.5 355.9 L711.5 354.3 L712.5 352.9 L713.5 351.7 L714.5 350.6 L715.5 349.8 L716.5 349.2 L717.5 348.8 L718.5 348.5 L719.5 348.5 L720.5 348.7 L721.5 349.1 L722.5 349.7 L723.5 350.5 L724.5 351.5 L725.5 352.7 L726.5 354.1 L727.5 355.7 L728.5 357.5 L729.5 359.5 L730.5 361.6 L731.5 363.9 L732.5 366.4 L733.5 369.1 L734.5 371.9 L735.5 374.8 L736.5 377.9 L737.5 381.2 L738.5 384.5 L739.5 388.0 L740.5 391.6 L741.5 395.3 L742.5 399.1 L743.5 403.0 L744.5 406.9 L745.5 411.0 L746.5 415.0 L747.5 419.1 L748.5 423.3 L749.5 427.5 L750.5 431.7 L751.5 435.9 L752.5 440.1 L753.5 444.3 L754.5 448.4 L755.5 452.6 L756.5 456.7 L757.5 460.7 L758.5 464.7 L759.5 468.6 L760.5 472.4 L761.5 476.1 L762.5 479.8 L763.5 483.3 L764.5 486.7 L765.5 490.0 L766.5 493.1 L767.5 496.1 L768.5 499.0 L769.5 501.7 L770.5 504.2 L771.5 506.6 L772.5 508.8 L773.5 510.8 L774.5 512.7 L775.5 514.3 L776.5 515.8 L777.5 517.1 L778.5 518.2 L779.5 519.0 L780.5 519.7 L781.5 520.2 L782.5 520.4 L783.5 520.5 L784.5 520.3 L785.5 520.0 L786.5 519.4 L787.5 518.7 L788.5 517.7 L789.5 516.5 L790.5 515.2 L791.5 513.6 L792.5 511.9 L793.5 510.0 L794.5 507.9 L795.5 505.6 L796.5 503.1 L797.5 500.5 L798.5 497.7 L799.5 494.8 L800.5 491.7 L801.5 488.5 L802.5 485.2 L803.5 481.7 L804.5 478.2 L805.5 474.5 L806.5 470.7 L807.5 466.9 L808.5 462.9 L809.5 458.9 L810.5 454.9 L811.5 450.8 L812.5 446.6 L813.5 442.4 L814.5 438.2 L815.5 434.0 L816.5 429.8 L817.5 425.6 L818.5 421.5 L819.5 417.3 L820.5 413.2 L821.5 409.2 L822.5 405.2 L823.5 401.3 L824.5 397.4 L825.5 393.7 L826.5 390.0 L827.5 386.5 L828.5 383.0 L829.5 379.7 L830.5 376.6 L831.5 373.5 L832.5 370.6 L833.5 367.9 L834.5 365.3 L835.5 362.9 L836.5 360.7 L837.5 358.6 L838.5 356.7 L839.5 355.0 L840.5 353.5 L841.5 352.2 L842.5 351.1 L843.5 350.1 L844.5 349.4 L845.5 348.9 L846.5 348.6 L847.5 348.5 L848.5 348.7 L849.5 349.4 L850.5 350.6 L851.5 352.2 L852.5 354.2 L853.5 356.6 L854.5 359.4 L855.5 362.6 L856.5 366.0 L857.5 369.7 L858.5 373.7 L859.5 377.9 L860.5 382.2 L861.5 386.6 L862.5 391.1 L863.5 395.5 L864.5 399.9 L865.5 404.3 L866.5 408.5 L867.5 412.5 L870.0 421.5 L872.0 425.5 L874.5 430.0 L876.0 432.5 L878.0 434.5" fill="none" stroke="#0000ff" stroke-width="1" shape-rendering="crispEdges"/></svg>
<div class="t ax" style="left:103px;width:51px;text-align:right;top:238px;color:#f00">5.000</div>
<div class="t ax" style="left:888px;top:238px;color:#00f">55.000</div>
<div class="t ax" style="left:103px;width:51px;text-align:right;top:276px;color:#f00">4.000</div>
<div class="t ax" style="left:888px;top:276px;color:#00f">44.000</div>
<div class="t ax" style="left:103px;width:51px;text-align:right;top:314px;color:#f00">3.000</div>
<div class="t ax" style="left:888px;top:314px;color:#00f">33.000</div>
<div class="t ax" style="left:103px;width:51px;text-align:right;top:351px;color:#f00">2.000</div>
<div class="t ax" style="left:888px;top:351px;color:#00f">22.000</div>
<div class="t ax" style="left:103px;width:51px;text-align:right;top:389px;color:#f00">1.000</div>
<div class="t ax" style="left:888px;top:389px;color:#00f">11.000</div>
<div class="t ax" style="left:103px;width:51px;text-align:right;top:427px;color:#f00">0.000</div>
<div class="t ax" style="left:888px;top:427px;color:#00f">0.000</div>
<div class="t ax" style="left:103px;width:51px;text-align:right;top:465px;color:#f00">-1.000</div>
<div class="t ax" style="left:888px;top:465px;color:#00f">-11.000</div>
<div class="t ax" style="left:103px;width:51px;text-align:right;top:503px;color:#f00">-2.000</div>
<div class="t ax" style="left:888px;top:503px;color:#00f">-22.000</div>
<div class="t ax" style="left:103px;width:51px;text-align:right;top:540px;color:#f00">-3.000</div>
<div class="t ax" style="left:888px;top:540px;color:#00f">-33.000</div>
<div class="t ax" style="left:103px;width:51px;text-align:right;top:578px;color:#f00">-4.000</div>
<div class="t ax" style="left:888px;top:578px;color:#00f">-44.000</div>
<div class="t ax c" style="left:142px;width:40px;top:631px">0.0</div>
<div class="t ax c" style="left:214px;width:40px;top:631px">0.4</div>
<div class="t ax c" style="left:286px;width:40px;top:631px">0.9</div>
<div class="t ax c" style="left:358px;width:40px;top:631px">1.3</div>
<div class="t ax c" style="left:430px;width:40px;top:631px">1.7</div>
<div class="t ax c" style="left:502px;width:40px;top:631px">2.2</div>
<div class="t ax c" style="left:573px;width:40px;top:631px">2.6</div>
<div class="t ax c" style="left:645px;width:40px;top:631px">3.0</div>
<div class="t ax c" style="left:717px;width:40px;top:631px">3.5</div>
<div class="t ax c" style="left:789px;width:40px;top:631px">3.9</div>
<div class="t ax c" style="left:861px;width:40px;top:631px">4.3</div>
<div class="t" style="left:509px;top:653px">时<span class="l"> </span>间<span class="l">(s)</span></div>
<div class="t" style="left:93px;top:395px;color:#f00">试</div>
<div class="t" style="left:93px;top:419px;color:#f00">验</div>
<div class="t" style="left:93px;top:443px;color:#f00">力</div>
<div class="t" style="left:93px;top:467px;color:#f00;font-size:11px"><span class="l">kN</span></div>
<div class="t" style="left:946px;top:419px;color:#00f">位</div>
<div class="t" style="left:946px;top:443px;color:#00f">移</div>
<div class="t" style="left:941px;top:467px;color:#00f;font-size:11px"><span class="l">(mm)</span></div>
<svg class="a" style="left:93px;top:246px" width="16" height="16" viewBox="0 0 16 16"><path d="M8 0 L0 16 H8Z" fill="#0000ff"/><path d="M8 0 L16 16 H8Z" fill="#00008b"/></svg>
<svg class="a" style="left:93px;top:271px" width="16" height="16" viewBox="0 0 16 16"><path d="M0 0 H8 V16Z" fill="#0000ff"/><path d="M8 0 H16 L8 16Z" fill="#00008b"/></svg>
<svg class="a" style="left:93px;top:584px" width="16" height="16" viewBox="0 0 16 16"><path d="M8 0 L0 16 H8Z" fill="#0000ff"/><path d="M8 0 L16 16 H8Z" fill="#00008b"/></svg>
<svg class="a" style="left:93px;top:609px" width="16" height="16" viewBox="0 0 16 16"><path d="M0 0 H8 V16Z" fill="#0000ff"/><path d="M8 0 H16 L8 16Z" fill="#00008b"/></svg>
<div class="a" style="left:941px;top:241px;width:23px;height:25px;border-right:1px solid #b8b8b8;border-bottom:1px solid #b8b8b8"></div>
<svg class="a" style="left:945px;top:246px" width="16" height="16" viewBox="0 0 16 16"><path d="M8 0 L0 16 H8Z" fill="#0000ff"/><path d="M8 0 L16 16 H8Z" fill="#00008b"/></svg>
<svg class="a" style="left:945px;top:271px" width="16" height="16" viewBox="0 0 16 16"><path d="M0 0 H8 V16Z" fill="#0000ff"/><path d="M8 0 H16 L8 16Z" fill="#00008b"/></svg>
<svg class="a" style="left:945px;top:584px" width="16" height="16" viewBox="0 0 16 16"><path d="M8 0 L0 16 H8Z" fill="#0000ff"/><path d="M8 0 L16 16 H8Z" fill="#00008b"/></svg>
<svg class="a" style="left:945px;top:609px" width="16" height="16" viewBox="0 0 16 16"><path d="M0 0 H8 V16Z" fill="#0000ff"/><path d="M8 0 H16 L8 16Z" fill="#00008b"/></svg>
<svg class="a" style="left:853px;top:652px" width="16" height="16" viewBox="0 0 16 16"><path d="M16 0 L0 8 H16Z" fill="#0000ff"/><path d="M0 8 L16 16 V8Z" fill="#00008b"/></svg>
<svg class="a" style="left:877px;top:652px" width="16" height="16" viewBox="0 0 16 16"><path d="M0 0 L16 8 H0Z" fill="#0000ff"/><path d="M0 8 H16 L0 16Z" fill="#00008b"/></svg>
<div class="a panelbg" style="left:976px;top:194px;width:299px;height:514px"></div>
<div class="a" style="left:976px;top:223px;width:1px;height:485px;background:#98a4a4"></div>
<div class="a panelbg" style="left:977px;top:223px;width:296px;height:399px;border:1px solid #b0b0a8"></div>
<div class="a" style="left:974px;top:194px;width:301px;height:29px;background:#f4f4f0"></div>
<svg class="a" style="left:977px;top:194px" width="300" height="31" viewBox="0 0 300 31">
<defs><linearGradient id="tr" x1="0" y1="0" x2="0" y2="1"><stop offset="0" stop-color="#fbeeee"/><stop offset=".35" stop-color="#d89090"/><stop offset=".7" stop-color="#a83030"/><stop offset="1" stop-color="#8a0c0c"/></linearGradient></defs>
<path d="M88.500 29.500 V1.500 H168 L174.500 7 V29.500Z" fill="url(#tr)" stroke="#b4acac" stroke-width="1"/>
<path d="M176.500 29.500 V1.500 H256 L262.500 7 V29.500Z" fill="url(#tr)" stroke="#b4acac" stroke-width="1"/>
<path d="M.5 31 V1.500 H81 L87.500 7 V29.500" fill="#f8f8f4" stroke="#b0b0a8" stroke-width="1"/>
<path d="M1 2.500 H81.500 L83 4" fill="none" stroke="#f4b830" stroke-width="3"/>
<path d="M11 10 L18 15.500 L11 21Z M18.500 10 L25.500 15.500 L18.500 21Z" fill="#0050d8"/>
<g fill="#1040e0"><rect x="99.500" y="9" width="2.400" height="2.400"/><rect x="99.500" y="14.300" width="2.400" height="2.400"/><rect x="99.500" y="19.600" width="2.400" height="2.400"/></g>
<path d="M104 10.500 H112.500 M104 15.500 H112.500 M104 20.500 H112.500" stroke="#000" stroke-width="1.100"/>
<path d="M188 13 H197.500" stroke="#0020f8" stroke-width="1.800"/><path d="M186.500 13 l4.500 -3.200 v6.400z" fill="#0020f8"/><path d="M187 20 H193" stroke="#f80000" stroke-width="1.800"/>
<path d="M200.300 9 V23" stroke="#000" stroke-width="2.600" stroke-dasharray="2 1.300"/><rect x="197.800" y="12" width="1.600" height="1.800" fill="#f80000"/>
</svg>
<div class="t" style="left:1005px;top:204px;line-height:15px">试验过程</div>
<div class="t" style="left:1093px;top:204px;line-height:15px;color:#fff">试验信息</div>
<div class="t" style="left:1181px;top:204px;line-height:15px;color:#fff">外部输入</div>
<div class="a" style="left:1247px;top:198px;width:25px;height:21px;background:#f0f0ee;border:1px solid #fff;border-right-color:#707070;border-bottom-color:#707070;box-shadow:inset -1px -1px 0 #b0b0b0"></div>
<div class="a" style="left:1255px;top:204px;width:10px;height:10px;border-radius:5px;background:#0050d8"></div>
<div class="grp" style="left:983px;top:229px;width:284px;height:388px"></div>
<div class="grp" style="left:993px;top:265px;width:262px;height:292px"></div>
<div class="t" style="left:1002px;top:238px">步号:</div>
<div class="combo" style="left:1039px;top:235px;width:75px"><div class="tx">第<span class="l"><b>1</b></span>步</div><div class="btn"></div></div>
<div class="a" style="left:1124px;top:234px;width:59px;height:22px;background:#f4f4f2;border:1px solid #003c74;border-radius:3px;box-shadow:inset -1px -1px 0 #c8c8c0,inset 1px 1px 0 #fff"></div>
<div class="t" style="left:1134px;top:238px">循环</div>
<div class="a" style="left:1167px;top:244px;border:4px solid transparent;border-top:4px solid #000;border-bottom:0"></div>
<svg class="a" style="left:1196px;top:238px" width="16" height="14" viewBox="0 0 16 14"><path d="M1.500 7.500 L5.500 11.500 L14 2.500" fill="none" stroke="#0848c8" stroke-width="2.8" stroke-linejoin="miter"/></svg>
<svg class="a" style="left:1218px;top:236px" width="18" height="17" viewBox="0 0 18 17"><path d="M1.500 6.500 H6 L7.500 8 H13.500 V15.500 H1.500Z" fill="#f8d878" stroke="#b88a18"/><path d="M1.500 15.500 L4.500 9.500 H16.500 L13.500 15.500Z" fill="#fce8a0" stroke="#b88a18"/>
<path d="M9 5 q3 -4 6 -1" fill="none" stroke="#2868d8" stroke-width="1.4"/><path d="M16.500 1.500 v4.500 h-4.500z" fill="#2868d8"/></svg>
<svg class="a" style="left:1242px;top:238px" width="15" height="15" viewBox="0 0 15 15"><rect x=".5" y=".5" width="14" height="14" fill="#1058d0"/><rect x="3" y="1.500" width="9" height="5" fill="#fff"/><rect x="3" y="3.500" width="9" height="1" fill="#1058d0"/><rect x="4" y="9" width="7" height="6" fill="#fff"/><rect x="5.500" y="10.500" width="2" height="4.500" fill="#1058d0"/></svg>
<div class="t" style="left:1010px;top:276px">控制方式<span class="l">:</span></div>
<div class="combo" style="left:1108px;top:272px;width:118px"><div class="tx" style="left:3px">位移</div><div class="btn"></div></div>
<div class="t" style="left:1010px;top:301px">波形<span class="l">:</span></div>
<div class="combo" style="left:1108px;top:297px;width:118px"><div class="tx" style="left:3px">正弦波</div><div class="btn"></div></div>
<div class="t" style="left:1010px;top:326px">中值<span class="l">:</span></div>
<div class="inp" style="left:1108px;top:322px;width:97px"><div class="tx" style="left:1px"><span class="l"><b>0</b></span></div></div>
<div class="t" style="left:1211px;top:326px"><span class="l">mm</span></div>
<div class="t" style="left:1010px;top:352px">幅值<span class="l">:</span></div>
<div class="inp" style="left:1108px;top:348px;width:98px"><div class="tx" style="left:23px"><span class="l"><b>5</b></span></div></div>
<div class="a" style="left:1109px;top:347px;width:22px;height:11px;background:#f0f0ee;border:1px solid #fff;border-right-color:#707070;border-bottom-color:#707070;box-shadow:inset -1px -1px 0 #a8a8a8"></div>
<div class="a" style="left:1109px;top:358px;width:22px;height:11px;background:#f0f0ee;border:1px solid #fff;border-right-color:#707070;border-bottom-color:#707070;box-shadow:inset -1px -1px 0 #a8a8a8"></div>
<div class="a" style="left:1115px;top:350px;border:4px solid transparent;border-bottom:4px solid #000;border-top:0"></div>
<div class="a" style="left:1115px;top:361px;border:4px solid transparent;border-top:4px solid #000;border-bottom:0"></div>
<div class="t" style="left:1211px;top:352px"><span class="l">mm</span></div>
<div class="t" style="left:1010px;top:377px">速度<span class="l">:</span></div>
<div class="inp" style="left:1108px;top:373px;width:97px"><div class="tx" style="left:1px"><span class="l"><b>0</b>.<b>0</b><b>3</b><b>1</b><b>4</b></span></div></div>
<div class="t" style="left:1211px;top:377px"><span class="l">m/s</span></div>
<div class="t" style="left:1010px;top:401px">频率<span class="l">:</span></div>
<div class="inp" style="left:1108px;top:399px;width:98px"><div class="tx" style="left:23px"><span class="l"><b>0</b>.<b>9</b><b>9</b><b>9</b></span></div></div>
<div class="a" style="left:1109px;top:398px;width:22px;height:11px;background:#f0f0ee;border:1px solid #fff;border-right-color:#707070;border-bottom-color:#707070;box-shadow:inset -1px -1px 0 #a8a8a8"></div>
<div class="a" style="left:1109px;top:409px;width:22px;height:11px;background:#f0f0ee;border:1px solid #fff;border-right-color:#707070;border-bottom-color:#707070;box-shadow:inset -1px -1px 0 #a8a8a8"></div>
<div class="a" style="left:1115px;top:401px;border:4px solid transparent;border-bottom:4px solid #000;border-top:0"></div>
<div class="a" style="left:1115px;top:412px;border:4px solid transparent;border-top:4px solid #000;border-bottom:0"></div>
<div class="t" style="left:1211px;top:403px"><span class="l">Hz</span></div>
<div class="a" style="left:1087px;top:403px;width:10px;height:10px;border-radius:5px;background:#0050d8"></div>
<div class="t" style="left:1010px;top:430px">试验次数<span class="l">:</span></div>
<div class="inp" style="left:1108px;top:426px;width:98px"><div class="tx" style="left:1px"><span class="l"><b>6</b><b>0</b></span></div></div>
<div class="t" style="left:1211px;top:430px">次</div>
<div class="cb" style="left:1008px;top:456px"></div>
<div class="t" style="left:1026px;top:455px">目标值<span class="l">:</span></div>
<div class="inp" style="left:1108px;top:452px;width:98px"><div class="tx" style="left:1px"><span class="l"><b>0</b></span></div></div>
<div class="t" style="left:1211px;top:456px"><span class="l">mm</span></div>
<div class="t" style="left:1010px;top:483px">转<span class="l">:</span></div>
<div class="combo" style="left:1108px;top:479px;width:118px"><div class="tx" style="left:3px">试验停止</div><div class="btn"></div></div>
<div class="cb" style="left:1008px;top:510px"></div>
<div class="t" style="left:1026px;top:509px">延时<span class="l">:</span></div>
<div class="inp" style="left:1108px;top:506px;width:60px"><div class="tx" style="left:1px"><span class="l"><b>1</b><b>2</b><b>0</b></span></div></div>
<div class="t" style="left:1175px;top:510px"><span class="l">s</span></div>
<div class="a" style="left:1196px;top:506px;width:40px;height:20px;background:#ffffcc;border:1px solid #b8b8a8"></div>
<div class="a" style="left:1002px;top:532px;width:73px;height:23px;background:#f4f4f0;border:1px solid #b8b894;border-radius:3px"></div>
<svg class="a" style="left:1009px;top:538px" width="14" height="11" viewBox="0 0 14 11"><path d="M.6 2.500 H3.500 L5 1.500 H12.300 Q13.400 1.500 13.400 2.500 Q13.400 3.500 12.300 3.500 H8 M9.500 3.500 Q10.800 3.500 10.800 4.500 Q10.800 5.500 9.500 5.500 H8 M9.300 5.500 Q10.400 5.500 10.400 6.500 Q10.400 7.500 9.300 7.500 H8 M8.800 7.500 Q9.800 7.500 9.800 8.500 Q9.800 9.500 8.800 9.500 H4 L.6 8.500Z" fill="none" stroke="#686868" stroke-width="1.100" stroke-linejoin="round"/></svg>
<svg class="a" style="left:1023px;top:537px" width="3" height="14" viewBox="0 0 3 14"><path d="M1.500 0 V14" stroke="#707070" stroke-width="2" stroke-dasharray="2 1.500"/></svg>
<div class="t" style="left:1035px;top:537px;color:#9a9a9a">发送</div>
<div class="t" style="left:1086px;top:537px">趋近速度<span class="l">:</span></div>
<div class="inp" style="left:1143px;top:533px;width:45px"><div class="tx" style="left:2px"><span class="l"><b>0</b></span></div></div>
<div class="t" style="left:1193px;top:537px"><span class="l">mm/min</span></div>
<div class="t" style="left:996px;top:569px">初始总计数<span class="l">:</span></div>
<div class="inp" style="left:1070px;top:565px;width:70px"><div class="tx" style="left:1px"><span class="l"><b>6</b><b>0</b></span></div></div>
<div class="t" style="left:1143px;top:569px">次</div>
<div class="cb" style="left:1181px;top:568px"></div>
<div class="t" style="left:1198px;top:568px">力反向</div>
<div class="cb" style="left:997px;top:596px"></div>
<svg class="a" style="left:999px;top:598px" width="9" height="9" viewBox="0 0 9 9"><path d="M1 4 L3.500 6.500 L8 1.500" fill="none" stroke="#108010" stroke-width="2"/></svg>
<div class="t" style="left:1014px;top:595px">滞回曲线取第</div>
<div class="combo" style="left:1094px;top:591px;width:54px"><div class="tx" style="left:1px"><span class="l"><b>2</b></span></div><div class="btn"></div></div>
<div class="t" style="left:1154px;top:595px">次循环的数据</div>
<div class="a" style="left:1226px;top:595px;width:12px;height:14px;background:#eeeeea"></div>
<div class="a" style="left:978px;top:627px;width:295px;height:79px;background:#c0dcc0;border:1px solid #b4c8b4;border-radius:3px"></div>
<div class="a" style="left:996px;top:639px;width:68px;height:59px;background:#f4f4f0;border:1px solid #c0b898;border-radius:2px"></div>
<div class="t c" style="left:996px;top:680px;width:68px;color:#9a9a9a">开始</div>
<div class="a" style="left:1093px;top:639px;width:68px;height:59px;background:#00bfff;border:1px solid #0a4a8a;border-radius:2px"></div>
<div class="t c" style="left:1093px;top:681px;width:68px;color:#fff">停止</div>
<div class="a" style="left:1191px;top:639px;width:68px;height:59px;background:#f4f4f0;border:1px solid #c0b898;border-radius:2px"></div>
<div class="t c" style="left:1191px;top:680px;width:68px;color:#9a9a9a">复位</div>
<svg class="a" style="left:1013px;top:642px" width="34" height="34" viewBox="0 0 34 34"><path d="M3 11 H11 V3 L31 17 L11 31 V24.500 H3Z" fill="#08080c" stroke="#20e020" stroke-width="1.600" stroke-linejoin="round"/><path d="M12 7 L26 17" stroke="#50505a" stroke-width="1.500" opacity=".6"/></svg>
<svg class="a" style="left:1111px;top:643px" width="32" height="32" viewBox="0 0 32 32"><defs><linearGradient id="sg" x1="0" y1="0" x2="0" y2="1"><stop offset="0" stop-color="#f06050"/><stop offset=".5" stop-color="#d81810"/><stop offset="1" stop-color="#a00808"/></linearGradient>
<linearGradient id="sw" x1="0" y1="0" x2="0" y2="1"><stop offset="0" stop-color="#ffffff"/><stop offset="1" stop-color="#c0c0c0"/></linearGradient></defs>
<circle cx="16" cy="16" r="14.500" fill="url(#sg)" stroke="#30a030" stroke-width=".8"/><circle cx="16" cy="16" r="11" fill="url(#sw)"/><path d="M8 24 L24 8" stroke="#d01810" stroke-width="3.800"/></svg>
<svg class="a" style="left:1207px;top:641px" width="36" height="36" viewBox="0 0 36 36"><defs>
<linearGradient id="rg1" x1="0" y1="0" x2="0" y2="1"><stop offset="0" stop-color="#203080"/><stop offset=".6" stop-color="#6080c0"/><stop offset="1" stop-color="#d8e0f0"/></linearGradient>
<linearGradient id="rg2" x1="0" y1="0" x2="0" y2="1"><stop offset="0" stop-color="#d8e0f0"/><stop offset=".4" stop-color="#7090c8"/><stop offset="1" stop-color="#182878"/></linearGradient></defs>
<path d="M12.500 30.500 A14 14 0 0 1 12 5" fill="none" stroke="url(#rg1)" stroke-width="5"/><path d="M9 1.500 H16.500 V10 H13 V5 H9Z" fill="#203080"/>
<path d="M23.500 5.500 A14 14 0 0 1 24 31" fill="none" stroke="url(#rg2)" stroke-width="5"/><path d="M27 34.500 H19.500 V26 H23 V31 H27Z" fill="#182878"/></svg>
<div class="a panelbg" style="left:4px;top:678px;width:968px;height:28px;border:1px solid #a0a0a0;border-top-color:#fff"></div>
<div class="a" style="left:4px;top:677px;width:968px;height:1px;background:#a0a0a0"></div>
<div class="a" style="left:85px;top:686px;width:10px;height:11px;background:#ff0000"></div>
<div class="a" style="left:95px;top:685px;width:13px;height:13px;background:#fff;border:1px solid #808080;border-right-color:#e0e0e0;border-bottom-color:#e0e0e0;box-shadow:inset 1px 1px 0 #404040"></div>
<div class="a" style="left:112px;top:684px;width:38px;height:15px;border:1px dotted #000"></div>
<div class="t" style="left:113px;top:685px">试验力</div>
<div class="a" style="left:162px;top:686px;width:10px;height:11px;background:#0000ff"></div>
<div class="a" style="left:172px;top:685px;width:13px;height:13px;background:#fff;border:1px solid #808080;border-right-color:#e0e0e0;border-bottom-color:#e0e0e0;box-shadow:inset 1px 1px 0 #404040"></div>
<svg class="a" style="left:174px;top:688px" width="9" height="8" viewBox="0 0 9 8"><path d="M1 3.500 L3.500 6 L8 1" fill="none" stroke="#000" stroke-width="1.8"/></svg>
<div class="t" style="left:190px;top:685px">位移</div>
<div class="a" style="left:231px;top:686px;width:10px;height:11px;background:#008000"></div>
<div class="a" style="left:241px;top:685px;width:13px;height:13px;background:#fff;border:1px solid #808080;border-right-color:#e0e0e0;border-bottom-color:#e0e0e0;box-shadow:inset 1px 1px 0 #404040"></div>
<div class="t" style="left:259px;top:685px">命令</div>
<svg class="a" style="left:304px;top:686px" width="16" height="13" viewBox="0 0 16 13"><path d="M9.500 10 A4.200 4.200 0 1 1 10 3.500" fill="none" stroke="#0850c0" stroke-width="3.200"/><path d="M7.500 .5 H15.500 V8.500 L12.500 6 L10 8Z" fill="#0850c0"/></svg>
<div class="a" style="left:324px;top:680px;width:299px;height:24px;background:#c0dcc0;border-left:1px solid #b0b8b0"></div>
<div class="t" style="left:353px;top:685px">时间<span class="l">:<b>2</b>.<b>6</b>s, </span>试验力<span class="l">:<b>4</b>.<b>7</b><b>0</b><b>9</b>kN, </span>位移<span class="l">:<b>5</b><b>1</b>.<b>7</b><b>9</b><b>9</b>mm</span></div>
<svg class="a" style="left:634px;top:685px" width="8" height="13" viewBox="0 0 8 13"><path d="M.5 .5 L7.500 6.500 L.5 12.500Z" fill="#e0e0e0" stroke="#909090"/></svg>
<div class="a" style="left:657px;top:687px;width:4px;height:10px;background:#0848c8"></div><div class="a" style="left:663px;top:687px;width:4px;height:10px;background:#0848c8"></div>
<svg class="a" style="left:680px;top:685px" width="14" height="14" viewBox="0 0 14 15"><rect x=".5" y=".5" width="13" height="14" fill="#d8d8d8" stroke="#909090"/><rect x="3" y="1.500" width="8" height="5" fill="#f4f4f4" stroke="#a0a0a0" stroke-width=".6"/><rect x="4" y="9" width="6" height="5.500" fill="#f4f4f4" stroke="#a0a0a0" stroke-width=".6"/></svg>
<svg class="a" style="left:711px;top:684px" width="18" height="17" viewBox="0 0 18 17"><path d="M.5 .5 H8 L10.500 3 V11.500 H.5Z" fill="#fff" stroke="#000"/><path d="M2 3.500 H6 M2 5.500 H8 M2 7.500 H8 M2 9.500 H6" stroke="#000" stroke-width="1" stroke-dasharray="2 1"/>
<rect x="8.500" y="8.500" width="8" height="8" fill="#ffe060" stroke="#000"/><rect x="10.500" y="11" width="4" height="5.500" fill="#fff" stroke="#000" stroke-width=".6"/>
<path d="M11 2 h5 v4 h1.500 l-4 4 l-4 -4 h1.500z" fill="#f01010"/></svg>
<svg class="a" style="left:745px;top:683px" width="17" height="17" viewBox="0 0 17 17"><rect x=".5" y="2.500" width="11" height="12" rx="1" fill="#f4dc90" stroke="#b89030"/><path d="M3.500 3.500 q0 -3 2.500 -3 q2.500 0 2.500 3z" fill="#5090e0" stroke="#2060b0" stroke-width=".6"/>
<path d="M6.500 6.500 H13 L16.500 10 V16.500 H6.500Z" fill="#fff" stroke="#5a88c8"/><path d="M13 6.500 V10 H16.500" fill="none" stroke="#5a88c8"/></svg>
<svg class="a" style="left:776px;top:685px" width="18" height="16" viewBox="0 0 18 16"><path d="M2.500 .5 V14" stroke="#000" stroke-width="1"/><path d="M1 1.500 H17 M1 5 H17 M1 8.500 H17" stroke="#808080" stroke-width=".9"/><path d="M1 12.500 H17" stroke="#000" stroke-width="1.200"/><path d="M3.500 13 V15 M7.500 13 V15 M11.500 13 V15 M15.500 13 V15" stroke="#000" stroke-width="1"/>
<path d="M3 11.500 C6 11.500 7 5.500 9.500 5.500 C12 5.500 13 11.500 16.500 11.500" fill="none" stroke="#f01010" stroke-width="1.300"/></svg>
<div class="a" style="left:0;top:706px;width:1276px;height:4px;background:#f0f0f0;border-top:1px solid #fff"></div>
<div class="a" style="left:2px;top:708px;width:1273px;height:1px;background:#a8a8a8"></div>
<div class="a" style="left:4px;top:710px;width:278px;height:21px;background:#f0f0f0;border:1px solid #bcbcbc;border-radius:1px"></div>
<div class="a" style="left:284px;top:710px;width:198px;height:21px;background:#f0f0f0;border:1px solid #bcbcbc;border-radius:1px"></div>
<div class="a" style="left:484px;top:710px;width:255px;height:21px;background:#f0f0f0;border:1px solid #bcbcbc;border-radius:1px"></div>
<div class="a" style="left:741px;top:710px;width:206px;height:21px;background:#f0f0f0;border:1px solid #bcbcbc;border-radius:1px"></div>
<div class="a" style="left:949px;top:710px;width:206px;height:21px;background:#f0f0f0;border:1px solid #bcbcbc;border-radius:1px"></div>
<div class="t" style="left:998px;top:713px"><span class="l"><b>2</b><b>0</b><b>2</b><b>1</b>-<b>4</b>-<b>2</b><b>0</b> <b>1</b><b>4</b>:<b>0</b><b>7</b>:<b>2</b><b>7</b></span></div>
<div class="a" style="left:1275px;top:0;width:1px;height:731px;background:#a8a8a8"></div>
</div></body></html>
